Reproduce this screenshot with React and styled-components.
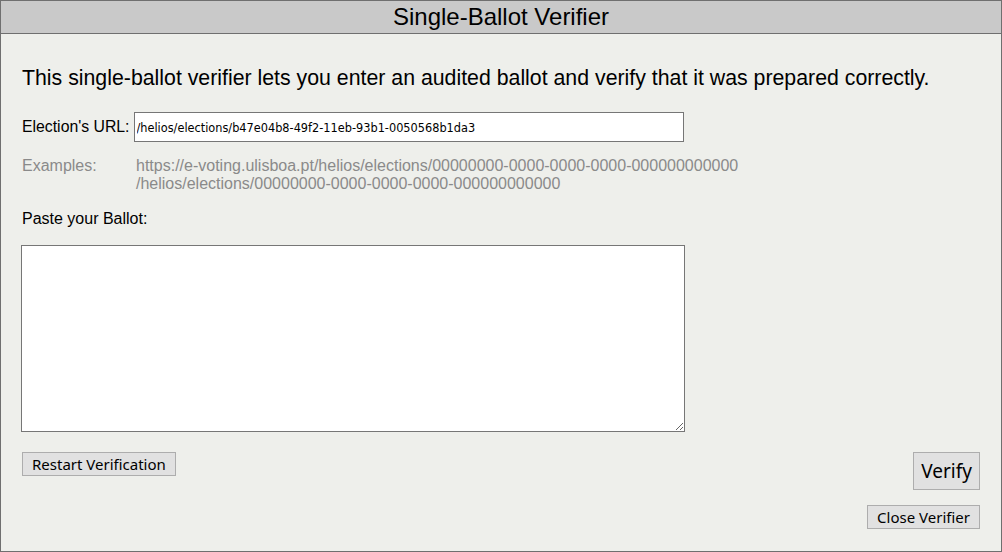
import React from 'react';
import styled, { createGlobalStyle } from 'styled-components';

const GlobalStyle = createGlobalStyle`
  html, body {
    margin: 0;
    padding: 0;
    background: #eeefeb;
  }
  * {
    box-sizing: border-box;
  }
`;

const Frame = styled.div`
  width: 1002px;
  height: 552px;
  border: 1px solid #6f6f6f;
  background: #eeefeb;
  display: flex;
  flex-direction: column;
  font-family: "Liberation Sans", Arial, sans-serif;
  color: #000;
`;

const TitleBar = styled.div`
  height: 33px;
  background: #c9c9c9;
  border-bottom: 1px solid #6f6f6f;
  display: flex;
  align-items: center;
  justify-content: center;
  font-size: 24px;
  line-height: 1;
`;

const Body = styled.div`
  flex: 1;
  padding: 32px 21px 0 21px;
  display: flex;
  flex-direction: column;
`;

const Intro = styled.p`
  margin: 0 0 22px;
  font-size: 21.3px;
  line-height: 24px;
`;

const UrlRow = styled.div`
  display: flex;
  align-items: center;
  gap: 4px;
  font-size: 15.8px;
  margin-bottom: 15px;
`;

const UrlInput = styled.input`
  width: 550px;
  height: 30px;
  border: 1px solid #767676;
  background: #fff;
  padding: 0 2px;
  font-family: "DejaVu Sans Condensed", "Liberation Sans Narrow", "Liberation Sans", sans-serif;
  font-size: 12.6px;
  color: #000;
  outline: none;
`;

const Examples = styled.div`
  display: grid;
  grid-template-columns: 114px auto;
  font-size: 16px;
  line-height: 18px;
  color: #8a8a8a;
  margin-bottom: 17px;
`;

const Label = styled.div`
  font-size: 16px;
  line-height: 18px;
  margin-bottom: 17px;
`;

const Ballot = styled.textarea`
  width: 664px;
  height: 187px;
  border: 1px solid #767676;
  background: #fff;
  resize: both;
  outline: none;
  margin: 0 0 20px -1px;
  display: block;
`;

const Actions = styled.div`
  display: flex;
  justify-content: space-between;
  align-items: flex-start;
`;

const Stack = styled.div`
  display: flex;
  flex-direction: column;
  align-items: flex-end;
  gap: 15px;
`;

const Button = styled.button`
  font-family: "Noto Sans", "DejaVu Sans", sans-serif;
  font-size: ${p => (p.$big ? '19px' : '15px')};
  height: ${p => (p.$big ? '38px' : '24px')};
  padding: ${p => (p.$big ? '0 7px' : '0 9px')};
  background: #e1e1e1;
  border: 1px solid #adadad;
  color: #000;
  border-radius: 0;
  display: flex;
  align-items: center;
  justify-content: center;
  line-height: 1;
`;

export default function App() {
  return (
    <>
      <GlobalStyle />
      <Frame>
        <TitleBar>Single-Ballot Verifier</TitleBar>
        <Body>
          <Intro>
            This single-ballot verifier lets you enter an audited ballot and verify that it was prepared correctly.
          </Intro>
          <UrlRow>
            <span>Election's URL:</span>
            <UrlInput defaultValue="/helios/elections/b47e04b8-49f2-11eb-93b1-0050568b1da3" />
          </UrlRow>
          <Examples>
            <span>Examples:</span>
            <div>
              <div>https://e-voting.ulisboa.pt/helios/elections/00000000-0000-0000-0000-000000000000</div>
              <div>/helios/elections/00000000-0000-0000-0000-000000000000</div>
            </div>
          </Examples>
          <Label>Paste your Ballot:</Label>
          <Ballot />
          <Actions>
            <Button>Restart Verification</Button>
            <Stack>
              <Button $big>Verify</Button>
              <Button>Close Verifier</Button>
            </Stack>
          </Actions>
        </Body>
      </Frame>
    </>
  );
}
